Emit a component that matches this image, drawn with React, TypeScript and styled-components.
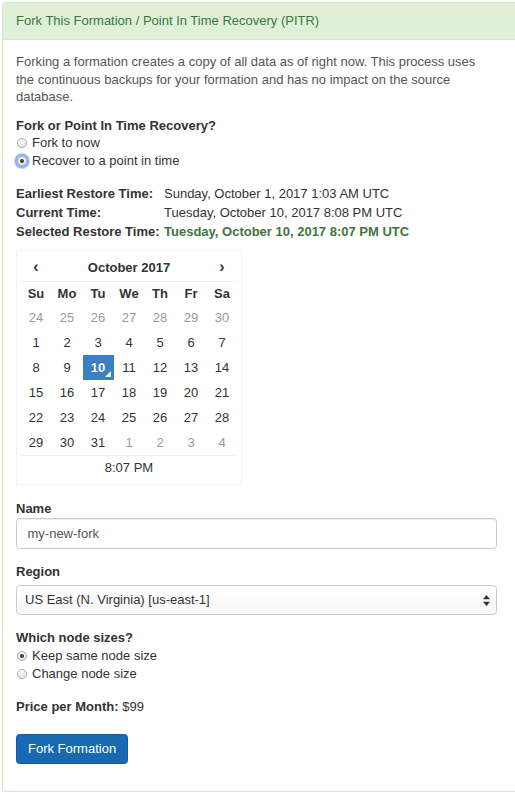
import React from 'react'
import styled, { createGlobalStyle } from 'styled-components'

const GlobalStyle = createGlobalStyle`
  html, body {
    margin: 0;
    padding: 0;
    background: #ffffff;
    overflow: hidden;
  }
  body {
    font-family: 'Liberation Sans', Helvetica, Arial, sans-serif;
    font-size: 13px;
    line-height: 17.5px;
    color: #333333;
  }
`

const Page = styled.div`
  padding: 2px 0 0 2px;
  width: 513px;
  overflow: hidden;
`

const Panel = styled.div`
  width: 530px;
  border: 1px solid #d6e9c6;
  border-radius: 3px;
  background: #ffffff;
`

const PanelHeading = styled.div`
  padding: 9px 13px 9.5px;
  background: #dff0d8;
  color: #3c763d;
  border-bottom: 1px solid #d6e9c6;
  border-radius: 2px 2px 0 0;
`

const PanelBody = styled.div`
  padding: 13px 13px 0;
`

const Intro = styled.p`
  margin: 0 0 11px;
  width: 474px;
  color: #555555;
`

const Label = styled.div<{ $gap?: number; $top?: number }>`
  font-weight: bold;
  margin-top: ${p => p.$top ?? 0}px;
  margin-bottom: ${p => p.$gap ?? 0}px;
`

const RadioRow = styled.label`
  display: flex;
  align-items: center;
  height: 18px;
  gap: 5px;
`

const RadioInput = styled.input<{ $focus?: boolean }>`
  appearance: none;
  margin: 0 0 0 1px;
  width: 10px;
  height: 10px;
  border-radius: 50%;
  border: 1px solid #a9a9a9;
  background: linear-gradient(#fdfdfd, #e4e4e4);
  position: relative;
  box-sizing: border-box;
  flex: none;
  box-shadow: ${p => (p.$focus ? '0 0 0 2px #86b3f5, 0 0 0 3px #b9d3fa' : 'none')};
  &:checked::after {
    content: '';
    position: absolute;
    left: 2px;
    top: 2px;
    width: 4px;
    height: 4px;
    border-radius: 50%;
    background: #3b3b3b;
  }
`

const InfoGrid = styled.div`
  display: grid;
  grid-template-columns: 148px auto;
  grid-auto-rows: 19px;
  align-items: center;
  margin-top: 14.5px;
`

const InfoKey = styled.div`
  font-weight: bold;
`

const InfoValue = styled.div<{ $highlight?: boolean }>`
  font-weight: ${p => (p.$highlight ? 'bold' : 'normal')};
  color: ${p => (p.$highlight ? '#3c763d' : '#333333')};
`

const Picker = styled.div`
  margin-top: 8px;
  width: 217px;
  padding: 3.5px;
  border: 1px solid #f3f3f3;
`

const CalRow = styled.div<{ $h: number; $line?: boolean }>`
  display: grid;
  grid-template-columns: repeat(7, 31px);
  height: ${p => p.$h}px;
  align-items: center;
  text-align: center;
  border-bottom: ${p => (p.$line ? '1px solid #f0f0f0' : 'none')};
`

const Arrow = styled.div`
  font-size: 16px;
  font-weight: bold;
  line-height: 1;
`

const MonthTitle = styled.div`
  grid-column: span 5;
  font-weight: bold;
`

const DayName = styled.div`
  font-weight: bold;
`

const Day = styled.div<{ $muted?: boolean; $active?: boolean }>`
  position: relative;
  height: 25px;
  line-height: 25px;
  color: ${p => (p.$active ? '#ffffff' : p.$muted ? '#999999' : '#333333')};
  background: ${p => (p.$active ? '#3b7fc4' : 'transparent')};
  font-weight: ${p => (p.$active ? 'bold' : 'normal')};
  text-shadow: ${p => (p.$active ? '0 -1px 0 rgba(0,0,0,0.25)' : 'none')};
  &::after {
    content: '';
    display: ${p => (p.$active ? 'block' : 'none')};
    position: absolute;
    right: 3px;
    bottom: 3px;
    border-left: 6px solid transparent;
    border-bottom: 6px solid #ffffff;
  }
`

const TimeFooter = styled.div`
  height: 24px;
  line-height: 24px;
  text-align: center;
`

const TextInput = styled.input`
  display: block;
  box-sizing: border-box;
  width: 481px;
  height: 31px;
  padding: 0 10.5px;
  border: 1px solid #cccccc;
  border-radius: 3.5px;
  box-shadow: inset 0 1px 1px rgba(0, 0, 0, 0.075);
  font: inherit;
  color: #555555;
`

const SelectWrap = styled.div`
  position: relative;
  width: 481px;
`

const Select = styled.select`
  display: block;
  appearance: none;
  box-sizing: border-box;
  width: 481px;
  height: 30px;
  padding: 0 8px;
  border: 1px solid #cccccc;
  border-radius: 4px;
  background: linear-gradient(#ffffff, #f7f7f7);
  font: inherit;
  color: #333333;
`

const SelectArrows = styled.svg`
  position: absolute;
  right: 7px;
  top: 10px;
  pointer-events: none;
`

const Price = styled.div`
  margin-top: 15px;
`

const Button = styled.button`
  margin: 18.5px 0 27px;
  height: 30.5px;
  padding: 0 11px;
  background: #1869b4;
  border: 1px solid #135d9f;
  border-radius: 3.5px;
  color: #ffffff;
  font: inherit;
  font-weight: 500;
`

const dayNames = ['Su', 'Mo', 'Tu', 'We', 'Th', 'Fr', 'Sa']

const weeks: { d: number; muted?: boolean }[][] = [
  [24, 25, 26, 27, 28, 29, 30].map(d => ({ d, muted: true })),
  [1, 2, 3, 4, 5, 6, 7].map(d => ({ d })),
  [8, 9, 10, 11, 12, 13, 14].map(d => ({ d })),
  [15, 16, 17, 18, 19, 20, 21].map(d => ({ d })),
  [22, 23, 24, 25, 26, 27, 28].map(d => ({ d })),
  [
    { d: 29 },
    { d: 30 },
    { d: 31 },
    { d: 1, muted: true },
    { d: 2, muted: true },
    { d: 3, muted: true },
    { d: 4, muted: true },
  ],
]

export default function App() {
  return (
    <Page>
      <GlobalStyle />
      <Panel>
        <PanelHeading>Fork This Formation / Point In Time Recovery (PITR)</PanelHeading>
        <PanelBody>
          <Intro>
            Forking a formation creates a copy of all data as of right now. This process uses the continuous backups
            for your formation and has no impact on the source database.
          </Intro>
          <Label>Fork or Point In Time Recovery?</Label>
          <RadioRow>
            <RadioInput type='radio' name='mode' />
            Fork to now
          </RadioRow>
          <RadioRow>
            <RadioInput type='radio' name='mode' defaultChecked $focus />
            Recover to a point in time
          </RadioRow>

          <InfoGrid>
            <InfoKey>Earliest Restore Time:</InfoKey>
            <InfoValue>Sunday, October 1, 2017 1:03 AM UTC</InfoValue>
            <InfoKey>Current Time:</InfoKey>
            <InfoValue>Tuesday, October 10, 2017 8:08 PM UTC</InfoValue>
            <InfoKey>Selected Restore Time:</InfoKey>
            <InfoValue $highlight>Tuesday, October 10, 2017 8:07 PM UTC</InfoValue>
          </InfoGrid>

          <Picker>
            <CalRow $h={26.5} $line>
              <Arrow>‹</Arrow>
              <MonthTitle>October 2017</MonthTitle>
              <Arrow>›</Arrow>
            </CalRow>
            <CalRow $h={23.5}>
              {dayNames.map(n => (
                <DayName key={n}>{n}</DayName>
              ))}
            </CalRow>
            {weeks.map((week, i) => (
              <CalRow key={i} $h={25} $line={i === weeks.length - 1}>
                {week.map((c, j) => (
                  <Day key={j} $muted={c.muted} $active={!c.muted && c.d === 10}>
                    {c.d}
                  </Day>
                ))}
              </CalRow>
            ))}
            <TimeFooter>8:07 PM</TimeFooter>
          </Picker>

          <Label $top={15} $gap={0.5}>
            Name
          </Label>
          <TextInput defaultValue='my-new-fork' />

          <Label $top={14} $gap={5}>
            Region
          </Label>
          <SelectWrap>
            <Select defaultValue='us-east-1'>
              <option value='us-east-1'>US East (N. Virginia) [us-east-1]</option>
            </Select>
            <SelectArrows width='7' height='11' viewBox='0 0 7 11'>
              <path d='M3.5 0 L7 4.2 H0 Z' fill='#333' />
              <path d='M3.5 11 L7 6.8 H0 Z' fill='#333' />
            </SelectArrows>
          </SelectWrap>

          <Label $top={14}>Which node sizes?</Label>
          <RadioRow>
            <RadioInput type='radio' name='size' defaultChecked />
            Keep same node size
          </RadioRow>
          <RadioRow>
            <RadioInput type='radio' name='size' />
            Change node size
          </RadioRow>

          <Price>
            <b>Price per Month:</b> $99
          </Price>

          <Button type='button'>Fork Formation</Button>
        </PanelBody>
      </Panel>
    </Page>
  )
}
